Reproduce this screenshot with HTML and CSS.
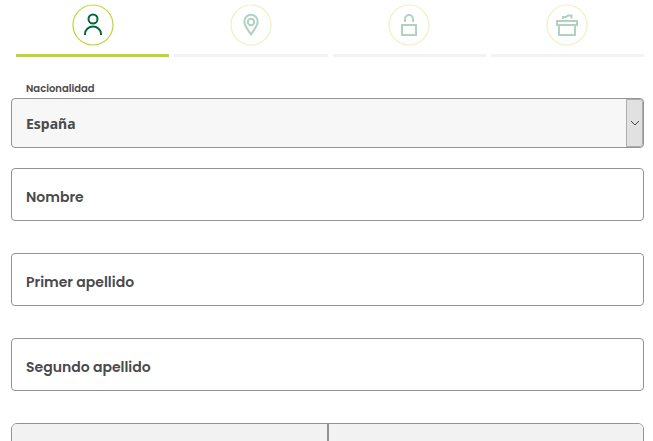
FILE: index.html
```html
<!DOCTYPE html>
<html lang="es">
<head>
  <meta charset="UTF-8">
  <meta name="viewport" content="width=device-width, initial-scale=1.0">
  <title>Nacionalidad</title>
  <link rel="stylesheet" href="styles.css">
</head>
<body>
  <ol class="steps">
    <li class="step active">
      <svg class="step-icon" viewBox="0 0 42 42">
        <circle class="ring" cx="21" cy="21" r="20"/>
        <circle class="line" cx="21" cy="15" r="4.5"/>
        <path class="line" d="M13 31v-1a8 7.5 0 0 1 16 0v1"/>
      </svg>
    </li>
    <li class="step">
      <svg class="step-icon" viewBox="0 0 42 42">
        <circle class="ring" cx="21" cy="21" r="20"/>
        <path class="line" d="M21 30.500C18 26 14.300 21.500 14.300 17.500a6.700 6.700 0 0 1 13.400 0C27.700 21.500 24 26 21 30.500z"/>
        <circle class="line" cx="21" cy="18" r="3.200"/>
      </svg>
    </li>
    <li class="step">
      <svg class="step-icon" viewBox="0 0 42 42">
        <circle class="ring" cx="21" cy="21" r="20"/>
        <path class="line" d="M14 21h14v10H14zM17 18v-3a4 4 0 0 1 8 0v3"/>
      </svg>
    </li>
    <li class="step">
      <svg class="step-icon" viewBox="0 0 42 42">
        <circle class="ring" cx="21" cy="21" r="20"/>
        <path class="line" d="M11 17h20v4H11zM13 21h16v10H13zM17 15v-2h4M20 13l2-1.500h3.500v3"/>
      </svg>
    </li>
  </ol>

  <form class="form">
    <label class="select-label" for="nacionalidad">Nacionalidad</label>
    <div class="select-box">
      <select id="nacionalidad">
        <option>España</option>
      </select>
      <span class="arrow">
        <svg viewBox="0 0 10 6"><path d="M1 1l4 4 4-4"/></svg>
      </span>
    </div>

    <div class="field">
      <input type="text" id="nombre">
      <label for="nombre">Nombre</label>
    </div>
    <div class="field">
      <input type="text" id="apellido1">
      <label for="apellido1">Primer apellido</label>
    </div>
    <div class="field">
      <input type="text" id="apellido2">
      <label for="apellido2">Segundo apellido</label>
    </div>

    <div class="options">
      <button type="button"></button>
      <button type="button"></button>
    </div>
  </form>
</body>
</html>
```

FILE: styles.css
```css
* {
  box-sizing: border-box;
}
body {
  margin: 0;
  height: 100vh;
  overflow: hidden;
  background: #fff;
  color: #4a4a4a;
  font-family: Poppins, Inter, sans-serif;
  font-weight: 600;
}

/* steps */
.steps {
  display: flex;
  gap: 5px;
  margin: 0;
  padding: 4px 9px 0 16px;
  list-style: none;
}
.step {
  flex: 1;
  height: 53px;
  border-bottom: 3px solid #f2f2f2;
  text-align: center;
}
.step.active {
  border-color: #bed62f;
}
.step-icon {
  width: 42px;
  height: 42px;
  opacity: 0.3;
  fill: none;
}
.active .step-icon {
  opacity: 1;
}
.ring {
  stroke: #bed62f;
  stroke-width: 1.2;
}
.line {
  stroke: #00693c;
  stroke-width: 2;
}

/* form */
.form {
  padding: 24px 9px 0 11px;
}
.select-label {
  display: block;
  height: 17px;
  padding-left: 15px;
  font-size: 10px;
  line-height: 15px;
}
.select-box {
  position: relative;
  margin-bottom: 20px;
}
select {
  display: block;
  width: 100%;
  height: 50px;
  padding: 0 32px 0 14px;
  appearance: none;
  border: 1px solid #949494;
  border-radius: 4px;
  background: #f7f7f7;
  color: #4a4a4a;
  font-family: "Noto Sans", sans-serif;
  font-size: 14px;
  font-weight: 700;
}
.arrow {
  position: absolute;
  top: 1px;
  right: 1px;
  bottom: 1px;
  display: flex;
  align-items: center;
  justify-content: center;
  width: 17px;
  border: 1px solid #adadad;
  border-radius: 0 3px 3px 0;
  background: #e1e1e1;
  pointer-events: none;
}
.arrow svg {
  width: 10px;
  height: 6px;
  fill: none;
  stroke: #444;
}
.field {
  position: relative;
  margin-bottom: 32px;
}
.field input {
  display: block;
  width: 100%;
  height: 53px;
  padding: 6px 14px 0;
  border: 1px solid #949494;
  border-radius: 4px;
  background: #fff;
  color: #4a4a4a;
  font: inherit;
}
.field label {
  position: absolute;
  top: 18px;
  left: 15px;
  font-size: 14px;
  line-height: 22px;
}
.options {
  display: flex;
  border: 1px solid #949494;
  border-radius: 6px;
  overflow: hidden;
}
.options button {
  flex: 1;
  height: 50px;
  padding: 0;
  border: 0;
  background: #f2f2f2;
}
.options button + button {
  border-left: 2px solid #949494;
}
```
